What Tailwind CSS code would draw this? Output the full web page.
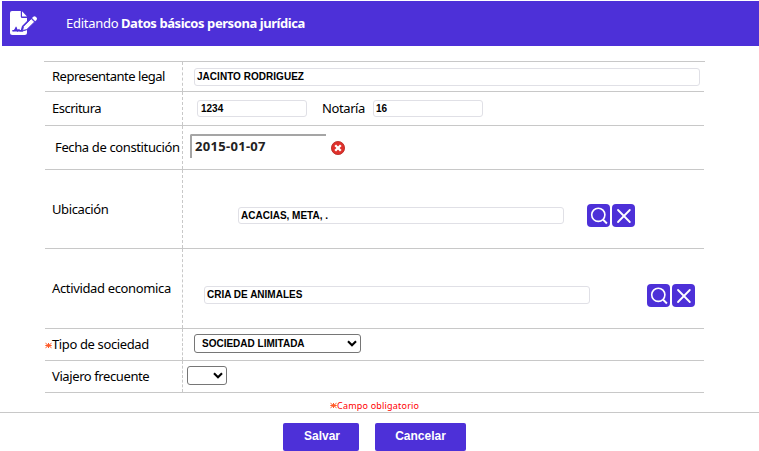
<!DOCTYPE html>
<html lang="es">
<head>
<meta charset="utf-8">
<title>Datos básicos persona jurídica</title>
<script src="https://cdn.jsdelivr.net/npm/@tailwindcss/browser@4"></script>
</head>
<body class="bg-white w-[759px] h-[451px] overflow-hidden text-black font-['Noto_Sans',sans-serif] text-[13px]">
<svg class="hidden">
  <symbol id="search" viewBox="0 0 23 23"><g fill="none" stroke="#fff" stroke-width="1.6"><circle cx="11.300" cy="10.800" r="6.600"/><path d="M15.900 15.500l4 4" stroke-width="1.900"/></g></symbol>
  <symbol id="close" viewBox="0 0 23 23"><path d="M6 6l11.800 12M17.800 6l-11.800 12" fill="none" stroke="#fff" stroke-width="1.800" stroke-linecap="round"/></symbol>
  <symbol id="star" viewBox="0 0 7 7"><path d="M.5 1.200l6 4.600M.5 5.800l6-4.600M.3 3.500h6.400M3.500 1v5" stroke="#ff5a28" stroke-width="1" fill="none"/></symbol>
  <symbol id="chevron" viewBox="0 0 10 7"><path d="M1 1.200l4 4 4-4" stroke="#000" stroke-width="2.100" fill="none"/></symbol>
</svg>
<header class="ml-[2px] mt-px h-[45px] bg-[#4d30d8] text-white flex items-center pl-[7px]">
  <svg class="w-[29px] h-[26px] -mt-px" viewBox="0 0 29 26">
    <path d="M3 1h8.800v5.500a1.500 1.500 0 0 0 1.500 1.500H18v3l-5 5-1.200 4H8.700l-1.500-3-2 3H3.500v1.500h10L18 20v2.500a2.500 2.500 0 0 1-2.500 2.500H3.500A2.500 2.500 0 0 1 1 22.500V3a2 2 0 0 1 2-2z" fill="#fff"/>
    <path d="M13 1.200L18 6.500h-5z" fill="#fff"/>
    <path d="M3.500 20.800l2-.3 1.500-3 1.500 3.500 1.500-1.500 1 1.500h3" fill="none" stroke="#4d30d8" stroke-width="1.100"/>
    <path d="M13.600 20.500l1-4.200 7.700-7.600 3.200 3.200-7.700 7.600z" fill="#fff" stroke="#4d30d8" stroke-width=".8"/>
    <path d="M23 8l1.300-1.200a1.700 1.700 0 0 1 2.400 0l.8.800a1.700 1.700 0 0 1 0 2.400l-1.300 1.200z" fill="#fff"/>
  </svg>
  <div class="ml-[28px] whitespace-nowrap leading-[18px] -mt-px"><span class="inline-block w-[55px] tracking-[-0.25px]">Editando</span><b class="tracking-[-0.43px]">Datos básicos persona jurídica</b></div>
</header>
<main>
  <div class="ml-[44px] mt-[15px] w-[661px] h-px bg-[#c8c8c8]"></div>
  <div class="ml-[45px] w-[659px] leading-[18px] whitespace-nowrap">
    <div class="flex h-[30px] border-b border-[#c8c8c8]">
      <div class="w-[138px] border-r border-dashed border-[#c8c8c8] pl-[7px] pt-[5px]"><span class="tracking-[-0.49px]">Representante legal</span></div>
      <div class="ml-[11px] mt-[6px] w-[506px] h-[18px] border border-[#e0e0e6] rounded-[3px] pl-[2px] leading-[16px] text-[10px] font-bold font-['Liberation_Sans',sans-serif]"><span class="tracking-[0.03px]">JACINTO RODRIGUEZ</span></div>
    </div>
    <div class="flex h-[34px] border-b border-[#c8c8c8]">
      <div class="w-[138px] border-r border-dashed border-[#c8c8c8] pl-[7px] pt-[7px]"><span class="tracking-[-0.5px]">Escritura</span></div>
      <div class="ml-[14px] mt-[8px] w-[110px] h-[17px] border border-[#e0e0e6] rounded-[3px] pl-[3px] leading-[15px] text-[10px] font-bold font-['Liberation_Sans',sans-serif]">1234</div>
      <div class="w-[66px] pl-[15px] pt-[7px]"><span class="tracking-[-0.4px]">Notaría</span></div>
      <div class="mt-[8px] w-[110px] h-[17px] border border-[#e0e0e6] rounded-[3px] pl-[2px] leading-[15px] text-[10px] font-bold font-['Liberation_Sans',sans-serif]">16</div>
    </div>
    <div class="flex h-[44px] border-b border-[#c8c8c8]">
      <div class="w-[138px] border-r border-dashed border-[#c8c8c8] pl-[10px] pt-[12px]"><span class="tracking-[-0.37px]">Fecha de constitución</span></div>
      <div class="ml-[7px] mt-[8px] w-[136px] h-[24px] border-l-2 border-t-2 border-[#a5a5a5] rounded-tl-[2px] pl-[3px] text-[#222] font-bold leading-[20px] tracking-[0.3px]">2015-01-07</div>
      <svg class="ml-[5px] mt-[15px] w-[14px] h-[14px]" viewBox="0 0 14 14"><circle cx="7" cy="7" r="6.600" fill="#df302b" stroke="#b52822" stroke-width=".8"/><path d="M4.200 4.200l5.600 5.600M9.800 4.200l-5.600 5.600" stroke="#fff" stroke-width="2.300"/></svg>
    </div>
    <div class="flex h-[79px] border-b border-[#c8c8c8]">
      <div class="w-[138px] border-r border-dashed border-[#c8c8c8] pl-[7px] pt-[30px]"><span class="tracking-[-0.4px]">Ubicación</span></div>
      <div class="ml-[55px] mt-[37px] w-[326px] h-[17px] border border-[#e0e0e6] rounded-[3px] pl-[2px] leading-[15px] text-[10px] font-bold font-['Liberation_Sans',sans-serif]">ACACIAS, META, .</div>
      <div class="ml-[23px] mt-[34px] flex gap-[2px]">
        <svg class="w-[23px] h-[23px] rounded-[4px] bg-[#4d30d8]"><use href="#search"/></svg>
        <svg class="w-[23px] h-[23px] rounded-[4px] bg-[#4d30d8]"><use href="#close"/></svg>
      </div>
    </div>
    <div class="flex h-[80px] border-b border-[#c8c8c8]">
      <div class="w-[138px] border-r border-dashed border-[#c8c8c8] pl-[7px] pt-[30px]"><span class="tracking-[-0.35px]">Actividad economica</span></div>
      <div class="ml-[21px] mt-[37px] w-[386px] h-[18px] border border-[#e0e0e6] rounded-[3px] pl-[2px] leading-[16px] text-[10px] font-bold font-['Liberation_Sans',sans-serif]">CRIA DE ANIMALES</div>
      <div class="ml-[57px] mt-[35px] flex gap-[2px]">
        <svg class="w-[23px] h-[23px] rounded-[4px] bg-[#4d30d8]"><use href="#search"/></svg>
        <svg class="w-[23px] h-[23px] rounded-[4px] bg-[#4d30d8]"><use href="#close"/></svg>
      </div>
    </div>
    <div class="flex h-[32px] border-b border-[#c8c8c8]">
      <div class="w-[138px] border-r border-dashed border-[#c8c8c8] pt-[6px] flex"><svg class="w-[7px] h-[7px] mt-[7px]"><use href="#star"/></svg><span class="tracking-[-0.37px]">Tipo de sociedad</span></div>
      <div class="ml-[11px] mt-[5px] w-[167px] h-[19px] border border-[#767676] rounded-[3px] pl-[7px] pr-[3px] flex items-center justify-between text-[10px] font-bold font-['Liberation_Sans',sans-serif]">SOCIEDAD LIMITADA<svg class="w-[10px] h-[7px]"><use href="#chevron"/></svg></div>
    </div>
    <div class="flex h-[32px] border-b border-[#c8c8c8]">
      <div class="w-[138px] border-r border-dashed border-[#c8c8c8] pl-[7px] pt-[6px]"><span class="tracking-[-0.4px]">Viajero frecuente</span></div>
      <div class="ml-[4px] mt-[5px] w-[40px] h-[19px] border border-[#767676] rounded-[3px] pr-[3px] flex items-center justify-end"><svg class="w-[10px] h-[7px]"><use href="#chevron"/></svg></div>
    </div>
  </div>
  <div class="h-[20px] border-b border-[#c8c8c8] flex pl-[330px] text-[#f00] text-[9px] leading-[12px] pt-[7px]"><svg class="w-[7px] h-[7px] mt-[2px]"><use href="#star"/></svg><span class="tracking-[0.2px]">Campo obligatorio</span></div>
  <div class="flex gap-[16px] pl-[283px] pt-[10px] text-white font-bold text-[12px] font-['Liberation_Sans',sans-serif]">
    <button class="w-[76px] h-[28px] rounded-[2px] bg-[#4d30d8] pb-[2px] pl-[2px]">Salvar</button>
    <button class="w-[91px] h-[28px] rounded-[2px] bg-[#4d30d8] pb-[2px]">Cancelar</button>
  </div>
</main>
</body>
</html>
